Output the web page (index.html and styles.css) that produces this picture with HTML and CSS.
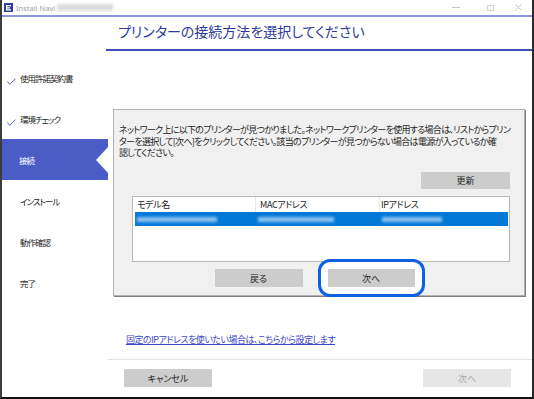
FILE: index.html
```html
<!DOCTYPE html>
<html lang="ja">
<head>
    <meta charset="UTF-8">
    <meta name="viewport" content="width=device-width, initial-scale=1.0">
    <title>Install Navi</title>
    <link rel="stylesheet" href="styles.css">
</head>
<body>
    <div class="window">
        <div class="titlebar">
            <svg class="app-icon" width="9" height="9" viewBox="0 0 9 9">
                <rect width="9" height="9" fill="#2f3f9f"/>
                <path d="M2 2h5v1.3H3.4v0.9H6v1.2H3.4v0.9H7V7.6H2z" fill="#fff"/>
            </svg>
            <span class="app-name">Install Navi</span>
            <span class="blur title-blur"></span>
            <div class="controls">
                <span class="ctl-min"></span>
                <span class="ctl-max"></span>
                <svg width="7" height="7" viewBox="0 0 7 7"><path d="M0.5 0.5l6 6M6.5 0.5l-6 6" stroke="#c4c4c4" stroke-width="1"/></svg>
            </div>
        </div>

        <div class="frame">
            <ul class="steps">
                <li class="done"><svg class="check" width="9" height="7" viewBox="0 0 9 7"><polyline points="0.5,3.5 2.8,6.3 8.5,0.6" fill="none" stroke="#5c66c9" stroke-width="1"/></svg>使用許諾契約書</li>
                <li class="done"><svg class="check" width="9" height="7" viewBox="0 0 9 7"><polyline points="0.5,3.5 2.8,6.3 8.5,0.6" fill="none" stroke="#5c66c9" stroke-width="1"/></svg>環境チェック</li>
                <li class="current">接続</li>
                <li>インストール</li>
                <li>動作確認</li>
                <li>完了</li>
            </ul>

            <div class="main">
                <h1 class="heading">プリンターの接続方法を選択してください</h1>

                <div class="group">
                    <p class="desc">ネットワーク上に以下のプリンターが見つかりました。ネットワークプリンターを使用する場合は、リストからプリン<br>ターを選択して[次へ]をクリックしてください。該当のプリンターが見つからない場合は電源が入っているか確<br>認してください。</p>
                    <div class="refresh-row">
                        <button class="btn">更新</button>
                    </div>
                    <div class="list">
                        <div class="list-head">
                            <span class="col col-model">モデル名</span>
                            <span class="col col-mac">MACアドレス</span>
                            <span class="col col-ip">IPアドレス</span>
                        </div>
                        <div class="list-row selected">
                            <span class="cell"><span class="blur row-blur w-model"></span></span>
                            <span class="cell"><span class="blur row-blur w-mac"></span></span>
                            <span class="cell"><span class="blur row-blur w-ip"></span></span>
                        </div>
                    </div>
                    <div class="nav-row">
                        <button class="btn btn-back">戻る</button>
                        <span class="ring"><button class="btn">次へ</button></span>
                    </div>
                </div>

                <a class="fixed-ip" href="#">固定のIPアドレスを使いたい場合は、こちらから設定します</a>

                <div class="footer">
                    <button class="btn">キャンセル</button>
                    <button class="btn" disabled>次へ</button>
                </div>
            </div>
        </div>
    </div>
</body>
</html>
```

FILE: styles.css
```css
* {
    box-sizing: border-box;
}
html, body {
    margin: 0;
    padding: 0;
    background-color: #ffffff;
}
body {
    font-family: "Noto Sans CJK JP", "Noto Sans", sans-serif;
    font-feature-settings: "palt";
    color: #1e1e1e;
}
.window {
    width: 534px;
    height: 399px;
    border-left: 2px solid #3c3c3c;
    border-right: 2px solid #2a2a2a;
    border-bottom: 2px solid #111111;
    display: flex;
    flex-direction: column;
    background-color: #ffffff;
    overflow: hidden;
}

/* タイトルバー */
.titlebar {
    height: 17px;
    flex-shrink: 0;
    border-bottom: 2px solid #8d96dc;
    display: flex;
    align-items: center;
    padding-left: 2px;
}
.app-icon {
    display: block;
}
.app-name {
    font-family: "Noto Sans", sans-serif;
    font-size: 7.5px;
    color: #a2a2a2;
    margin-left: 3px;
}
.blur {
    display: inline-block;
    filter: blur(1.5px);
}
.title-blur {
    width: 56px;
    height: 7px;
    margin-left: 2px;
    background-color: #dcdcdc;
}
.controls {
    margin-left: auto;
    padding-right: 10px;
    display: flex;
    align-items: center;
}
.ctl-min {
    width: 8px;
    height: 1px;
    background-color: #c4c4c4;
    margin-right: 27px;
}
.ctl-max {
    width: 7px;
    height: 6px;
    border: 1px solid #d2d2d2;
    margin-right: 21px;
}
.controls svg {
    display: block;
}

.frame {
    flex: 1;
    display: flex;
    min-height: 0;
}

/* 左のステップ一覧 */
.steps {
    list-style: none;
    margin: 0;
    padding: 40px 0 0 0;
    width: 106px;
    flex-shrink: 0;
}
.steps li {
    height: 41px;
    display: flex;
    align-items: center;
    padding-left: 18px;
    font-size: 8.5px;
    letter-spacing: -1px;
    color: #1e1e1e;
    position: relative;
}
.steps li.done {
    padding-left: 5px;
}
.check {
    margin: 7px 4px 0 0;
}
.steps li.current {
    background-color: #4a5dc7;
    color: #ffffff;
    padding-left: 17px;
}
.steps li.current::after {
    content: "";
    position: absolute;
    right: 0;
    top: 50%;
    margin-top: -13px;
    border-right: 12px solid #ffffff;
    border-top: 13px solid transparent;
    border-bottom: 13px solid transparent;
}

/* メイン */
.main {
    flex: 1;
    min-width: 0;
    display: flex;
    flex-direction: column;
}
.heading {
    margin: 0 0 0 -2px;
    padding: 4px 0 8px 12px;
    font-size: 14px;
    line-height: 20px;
    font-weight: normal;
    color: #2c3b9b;
    border-bottom: 2px solid #3e4fb7;
}
.group {
    margin: 58px 7px 0 5px;
    height: 187px;
    border: 1px solid #b2b2b2;
    box-shadow: 1px 1px 0 #7c7c7c;
    background-color: #f0f0f0;
    padding: 14px 14px 0 5px;
}
.desc {
    margin: 0;
    font-size: 9px;
    letter-spacing: -0.7px;
    line-height: 11.5px;
    white-space: nowrap;
    color: #1e1e1e;
}
.btn {
    width: 88px;
    height: 18px;
    padding: 0;
    border: none;
    background-color: #cccccc;
    font-family: inherit;
    font-feature-settings: "palt";
    font-size: 9px;
    color: #1e1e1e;
}
.btn:disabled {
    background-color: #e6e6e6;
    color: #a8a8a8;
}
.refresh-row {
    display: flex;
    justify-content: flex-end;
    margin-top: 13.5px;
}
.refresh-row .btn {
    width: 89px;
    height: 17px;
}

/* プリンター一覧 */
.list {
    margin: 7px 0 0 13px;
    width: 378px;
    height: 66px;
    border: 1px solid #b8b8b8;
    background-color: #ffffff;
}
.list-head, .list-row {
    display: grid;
    grid-template-columns: 123px 124px 1fr;
}
.list-head {
    height: 15px;
}
.col {
    font-size: 9px;
    letter-spacing: -0.4px;
    line-height: 15px;
    border-right: 1px solid #e8e8e8;
}
.col-model {
    padding-left: 4px;
}
.col-mac {
    padding-left: 4px;
}
.col-ip {
    padding-left: 1px;
    border-right: none;
}
.list-row.selected {
    height: 14px;
    margin: 0 1px 0 2px;
    background-color: #0078d7;
    grid-template-columns: 121px 124px 1fr;
}
.cell {
    display: flex;
    align-items: center;
    padding-left: 2px;
}
.row-blur {
    height: 5px;
    background-color: rgba(190, 220, 250, 0.75);
}
.w-model { width: 80px; }
.w-mac { width: 76px; }
.w-ip { width: 60px; }

.nav-row {
    display: flex;
    justify-content: center;
    align-items: center;
    margin-top: 7px;
}
.ring {
    display: flex;
    margin: -10px -10px -10px 15px;
    padding: 7px;
    border: 3px solid #1060e2;
    border-radius: 12px;
    background-color: #ffffff;
}
.ring .btn {
    width: 87px;
}

.fixed-ip {
    margin: 38px 0 0 18px;
    align-self: flex-start;
    font-size: 9px;
    letter-spacing: -0.5px;
    line-height: 11px;
    color: #3a47c9;
    text-decoration: underline;
}

/* 下部ボタン */
.footer {
    margin-top: 14px;
    border-top: 1px solid #e2e2e2;
    padding: 9px 21px 0 16px;
    display: flex;
    justify-content: space-between;
}
```
